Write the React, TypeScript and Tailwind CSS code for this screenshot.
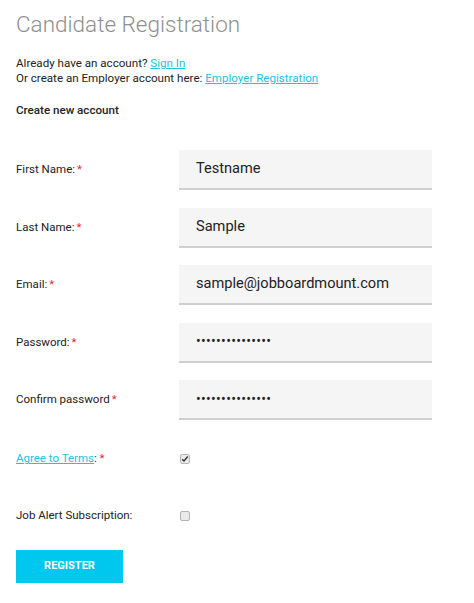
import React from "react";

const fields = [
  { label: "First Name:", value: "Testname", required: true },
  { label: "Last Name:", value: "Sample", required: true },
  { label: "Email:", value: "sample@jobboardmount.com", required: true },
  { label: "Password:", value: "•••••••••••••••", required: true, secret: true },
  { label: "Confirm password", value: "•••••••••••••••", required: true, secret: true },
];

function Checkbox({ checked }: { checked?: boolean }) {
  return (
    <span className="flex h-[10px] w-[10px] items-center justify-center rounded-[2px] border border-[#b5b5b5] bg-[#eaeaea]">
      {checked && (
        <svg viewBox="0 0 10 10" className="h-[8px] w-[8px]" aria-hidden="true">
          <path d="M1.5 5.2l2.2 2.2L8.5 2" fill="none" stroke="#333" strokeWidth="1.8" />
        </svg>
      )}
    </span>
  );
}

export default function App() {
  return (
    <div className="min-h-screen bg-white px-4 font-['Roboto',sans-serif] text-[#222]">
      <h1 className="pt-[7px] text-[22.5px] font-light leading-[34px] text-[#8f8f8f]">
        Candidate Registration
      </h1>

      <div className="mt-[15px] text-[11.6px] leading-[15px]">
        <p>
          Already have an account?{" "}
          <a href="#" className="text-[#21c3dd] underline">
            Sign In
          </a>
        </p>
        <p>
          Or create an Employer account here:{" "}
          <a href="#" className="text-[#21c3dd] underline">
            Employer Registration
          </a>
        </p>
      </div>

      <h2 className="mt-[17px] text-[11.6px] font-medium leading-[15px]">Create new account</h2>

      <form className="mt-[32px] flex flex-col">
        <div className="flex flex-col gap-[17.5px]">
          {fields.map((f) => (
            <div key={f.label} className="flex items-center">
              <label className="w-[163px] text-[11.5px]">
                {f.label}
                {f.required && <span className="ml-[2px] text-[#e8263a]">*</span>}
              </label>
              <div
                className={`flex h-[40px] w-[253px] items-center border-b-2 border-[#cfcfcf] bg-[#f5f5f5] pl-[17px] ${
                  f.secret ? "text-[14px] tracking-[0.3px]" : "text-[14.6px]"
                }`}
              >
                {f.value}
              </div>
            </div>
          ))}
        </div>

        <div className="mt-[19px] flex h-[40px] items-center">
          <label className="w-[164px] text-[11.5px]">
            <a href="#" className="text-[#21c3dd] underline">
              Agree to Terms
            </a>
            : <span className="text-[#e8263a]">*</span>
          </label>
          <Checkbox checked />
        </div>

        <div className="mt-[17px] flex h-[40px] items-center">
          <label className="w-[164px] text-[11.5px]">Job Alert Subscription:</label>
          <Checkbox />
        </div>

        <button
          type="button"
          className="mt-[14px] h-[33px] w-[107px] bg-[#00c7ee] text-[11px] font-bold text-white"
        >
          REGISTER
        </button>
      </form>
    </div>
  );
}
